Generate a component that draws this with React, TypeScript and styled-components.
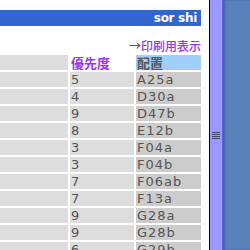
import React from 'react'
import styled, { createGlobalStyle } from 'styled-components'

const Global = createGlobalStyle`
  body {
    margin: 0;
    font-family: 'DejaVu Sans', 'Noto Sans CJK JP', sans-serif;
  }
`

const Screen = styled.div`
  display: flex;
  width: 250px;
  height: 250px;
  overflow: hidden;
`

const Page = styled.div`
  width: 210px;
  flex: none;
  background: #ffffff;
  padding: 10px 8px 0 0;
  box-sizing: border-box;
  border-right: 1px solid #000000;
`

const TitleBar = styled.div`
  height: 16px;
  background: #3366cc;
  color: #ffffff;
  font-weight: bold;
  font-size: 12px;
  line-height: 16px;
  text-align: right;
  padding-right: 4px;
  letter-spacing: -0.3px;
`

const PrintLink = styled.div`
  margin-top: 11px;
  height: 18px;
  text-align: right;
  font-size: 12px;
  line-height: 18px;
  color: #9933ee;
  font-family: 'Noto Sans CJK JP', 'DejaVu Sans', sans-serif;
  font-weight: 500;
  span {
    color: #555555;
  }
`

const Table = styled.div`
  display: grid;
  grid-template-columns: 68px 64px 65px;
  grid-auto-rows: 15px;
  column-gap: 2px;
  row-gap: 2px;
  width: 201px;
`

const Cell = styled.div<{ $tone: 'light' | 'dark' | 'blank' | 'blue' }>`
  background: ${(p) =>
    p.$tone === 'dark'
      ? '#cccccc'
      : p.$tone === 'blue'
      ? '#a0cffd'
      : p.$tone === 'blank'
      ? '#ffffff'
      : '#dddddd'};
  color: #555555;
  font-size: 13px;
  line-height: 15px;
  padding-left: 1px;
  white-space: nowrap;
`

const Code = styled(Cell)`
  letter-spacing: 1px;
`

const HeadLabel = styled.div<{ $color: string }>`
  font-family: 'Noto Sans CJK JP', sans-serif;
  font-weight: bold;
  font-size: 13px;
  line-height: 15px;
  color: ${(p) => p.$color};
`

const Gutter = styled.div`
  width: 13px;
  flex: none;
  background: #9999ff;
  border-right: 1px solid #6666dd;
  display: flex;
  justify-content: center;
  padding-top: 132px;
  box-sizing: border-box;
`

const Desk = styled.div`
  flex: 1;
  background: #5a82b8;
  box-shadow: inset 2px 0 2px rgba(40, 60, 160, 0.5);
`

const rows: [string, string][] = [
  ['5', 'A25a'],
  ['4', 'D30a'],
  ['9', 'D47b'],
  ['8', 'E12b'],
  ['3', 'F04a'],
  ['3', 'F04b'],
  ['7', 'F06ab'],
  ['7', 'F13a'],
  ['9', 'G28a'],
  ['9', 'G28b'],
  ['6', 'G29b']
]

const Grip = () => (
  <svg width="8" height="8" viewBox="0 0 8 8">
    {[0, 2, 4, 6].map((y) => (
      <rect key={y} x="0" y={y} width="8" height="1" fill="#444466" />
    ))}
  </svg>
)

const App = () => (
  <>
    <Global />
    <Screen>
      <Page>
        <TitleBar>sor shi</TitleBar>
        <PrintLink>
          <span>→</span>印刷用表示
        </PrintLink>
        <Table>
          <Cell $tone="light" />
          <Cell $tone="blank">
            <HeadLabel $color="#9933ee">優先度</HeadLabel>
          </Cell>
          <Cell $tone="blue">
            <HeadLabel $color="#555555">配置</HeadLabel>
          </Cell>
          {rows.map(([prio, place], i) => (
            <React.Fragment key={i}>
              <Cell $tone="light" />
              <Cell $tone="light">{prio}</Cell>
              <Code $tone="dark">{place}</Code>
            </React.Fragment>
          ))}
        </Table>
      </Page>
      <Gutter>
        <Grip />
      </Gutter>
      <Desk />
    </Screen>
  </>
)

export default App
